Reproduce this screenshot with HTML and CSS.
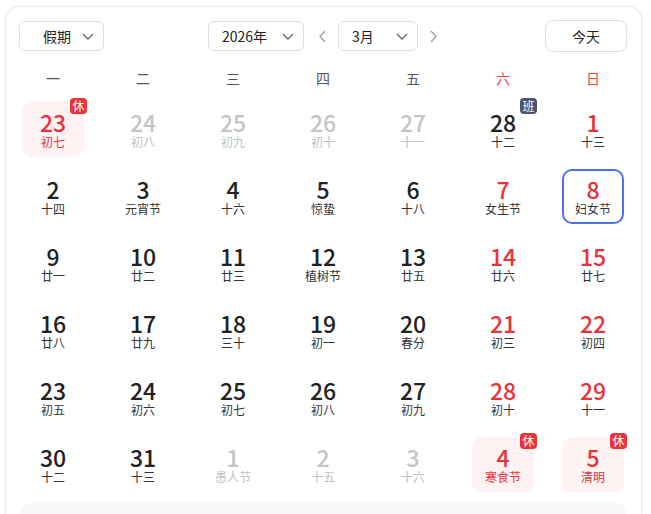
FILE: index.html
```html
<!DOCTYPE html>
<html lang="zh-CN">
<head>
<meta charset="utf-8">
<title>万年历</title>
<link rel="stylesheet" href="styles.css">
</head>
<body>
<div class="card">
  <div class="toolbar">
    <div class="select select-holiday"><span>假期</span><svg class="chev" viewBox="0 0 12 7"><path d="M1 1 L6 6 L11 1"/></svg></div>
    <div class="select select-year"><span>2026年</span><svg class="chev" viewBox="0 0 12 7"><path d="M1 1 L6 6 L11 1"/></svg></div>
    <svg class="arrow arrow-prev" viewBox="0 0 7 13"><path d="M6 1 L1 6.5 L6 12"/></svg>
    <div class="select select-month"><span>3月</span><svg class="chev" viewBox="0 0 12 7"><path d="M1 1 L6 6 L11 1"/></svg></div>
    <svg class="arrow arrow-next" viewBox="0 0 7 13"><path d="M1 1 L6 6.5 L1 12"/></svg>
    <button class="today">今天</button>
  </div>

  <div class="weekdays">
    <span>一</span><span>二</span><span>三</span><span>四</span><span>五</span><span class="wk-red">六</span><span class="wk-red">日</span>
  </div>

  <div class="days">
    <div class="cell holiday"><span class="num">23</span><span class="lunar">初七</span><span class="badge">休</span></div>
    <div class="cell other"><span class="num">24</span><span class="lunar">初八</span></div>
    <div class="cell other"><span class="num">25</span><span class="lunar">初九</span></div>
    <div class="cell other"><span class="num">26</span><span class="lunar">初十</span></div>
    <div class="cell other"><span class="num">27</span><span class="lunar">十一</span></div>
    <div class="cell"><span class="num">28</span><span class="lunar">十二</span><span class="badge badge-work">班</span></div>
    <div class="cell weekend"><span class="num">1</span><span class="lunar">十三</span></div>

    <div class="cell"><span class="num">2</span><span class="lunar">十四</span></div>
    <div class="cell"><span class="num">3</span><span class="lunar">元宵节</span></div>
    <div class="cell"><span class="num">4</span><span class="lunar">十六</span></div>
    <div class="cell"><span class="num">5</span><span class="lunar">惊蛰</span></div>
    <div class="cell"><span class="num">6</span><span class="lunar">十八</span></div>
    <div class="cell weekend"><span class="num">7</span><span class="lunar">女生节</span></div>
    <div class="cell weekend selected"><span class="num">8</span><span class="lunar">妇女节</span></div>

    <div class="cell"><span class="num">9</span><span class="lunar">廿一</span></div>
    <div class="cell"><span class="num">10</span><span class="lunar">廿二</span></div>
    <div class="cell"><span class="num">11</span><span class="lunar">廿三</span></div>
    <div class="cell"><span class="num">12</span><span class="lunar">植树节</span></div>
    <div class="cell"><span class="num">13</span><span class="lunar">廿五</span></div>
    <div class="cell weekend"><span class="num">14</span><span class="lunar">廿六</span></div>
    <div class="cell weekend"><span class="num">15</span><span class="lunar">廿七</span></div>

    <div class="cell"><span class="num">16</span><span class="lunar">廿八</span></div>
    <div class="cell"><span class="num">17</span><span class="lunar">廿九</span></div>
    <div class="cell"><span class="num">18</span><span class="lunar">三十</span></div>
    <div class="cell"><span class="num">19</span><span class="lunar">初一</span></div>
    <div class="cell"><span class="num">20</span><span class="lunar">春分</span></div>
    <div class="cell weekend"><span class="num">21</span><span class="lunar">初三</span></div>
    <div class="cell weekend"><span class="num">22</span><span class="lunar">初四</span></div>

    <div class="cell"><span class="num">23</span><span class="lunar">初五</span></div>
    <div class="cell"><span class="num">24</span><span class="lunar">初六</span></div>
    <div class="cell"><span class="num">25</span><span class="lunar">初七</span></div>
    <div class="cell"><span class="num">26</span><span class="lunar">初八</span></div>
    <div class="cell"><span class="num">27</span><span class="lunar">初九</span></div>
    <div class="cell weekend"><span class="num">28</span><span class="lunar">初十</span></div>
    <div class="cell weekend"><span class="num">29</span><span class="lunar">十一</span></div>

    <div class="cell"><span class="num">30</span><span class="lunar">十二</span></div>
    <div class="cell"><span class="num">31</span><span class="lunar">十三</span></div>
    <div class="cell other"><span class="num">1</span><span class="lunar">愚人节</span></div>
    <div class="cell other"><span class="num">2</span><span class="lunar">十五</span></div>
    <div class="cell other"><span class="num">3</span><span class="lunar">十六</span></div>
    <div class="cell holiday"><span class="num">4</span><span class="lunar">寒食节</span><span class="badge">休</span></div>
    <div class="cell holiday"><span class="num">5</span><span class="lunar">清明</span><span class="badge">休</span></div>
  </div>

  <div class="detail"></div>
</div>
</body>
</html>
```

FILE: styles.css
```css
* { box-sizing: border-box; }

html, body {
  margin: 0;
  background: #ffffff;
  font-family: "Noto Sans CJK SC", "Noto Sans", sans-serif;
  color: #222;
}

body { overflow: hidden; height: 514px; }

.card {
  margin: 6px 9px 0 5px;
  height: 530px;
  border: 1px solid #e7e8ec;
  border-bottom: none;
  border-radius: 14px 14px 0 0;
  padding-top: 13px;
}

/* toolbar */
.toolbar {
  display: flex;
  align-items: center;
  height: 32px;
  padding: 0 14px 0 13px;
}

.select {
  height: 30px;
  border: 1px solid #dcdfe6;
  border-radius: 6px;
  display: flex;
  align-items: center;
  justify-content: space-between;
  padding: 0 9px 0 13px;
  font-size: 14px;
  color: #222;
  background: #fff;
}

.select-holiday { width: 85px; padding-left: 23px; }
.select-year { width: 96px; margin-left: 104px; }
.select-month { width: 80px; margin-left: 12px; }

.chev {
  width: 12px;
  height: 7px;
  fill: none;
  stroke: #606266;
  stroke-width: 1.3;
}

.arrow {
  width: 7px;
  height: 13px;
  fill: none;
  stroke: #a0a3aa;
  stroke-width: 1.4;
}
.arrow-prev { margin-left: 15px; }
.arrow-next { margin-left: 12px; }

.today {
  margin-left: auto;
  width: 82px;
  height: 32px;
  border: 1px solid #dcdfe6;
  border-radius: 8px;
  background: #fff;
  font-family: inherit;
  font-size: 14px;
  color: #222;
  padding: 0;
}

/* weekdays */
.weekdays {
  display: grid;
  grid-template-columns: repeat(7, 90px);
  padding-left: 2px;
  margin-top: 14px;
  height: 24px;
  line-height: 24px;
  font-size: 14px;
  color: #555;
  text-align: center;
}
.wk-red { color: #f0434b; }

/* days */
.days {
  display: grid;
  grid-template-columns: repeat(7, 90px);
  grid-auto-rows: 55px;
  row-gap: 12px;
  padding-left: 2px;
  margin-top: 12px;
}

.cell {
  position: relative;
  justify-self: center;
  width: 62px;
  height: 55px;
  border-radius: 10px;
  display: flex;
  flex-direction: column;
  align-items: center;
  justify-content: center;
  padding-top: 1px;
}

.num {
  font-size: 23px;
  font-weight: 500;
  line-height: 24px;
  color: #222;
}

.lunar {
  font-size: 12px;
  line-height: 16px;
  color: #333;
}

.weekend .num { color: #e8333b; }

.other .num { color: #c4c4c4; }
.other .lunar { color: #c0c0c0; }

.holiday { background: #fff2f2; }
.holiday .num { color: #e8333b; }
.holiday .lunar { color: #e8333b; }

.selected {
  border: 2px solid #4f6ef6;
}

.badge {
  position: absolute;
  top: -4px;
  right: -3px;
  width: 17px;
  height: 16px;
  border-radius: 4px;
  background: #e8333b;
  color: #fff;
  font-size: 12px;
  line-height: 16px;
  text-align: center;
}
.badge-work { background: #4b5370; }

/* bottom panel */
.detail {
  margin: 11px 14px 0;
  height: 60px;
  background: #f7f8fa;
  border-radius: 12px;
}
```
